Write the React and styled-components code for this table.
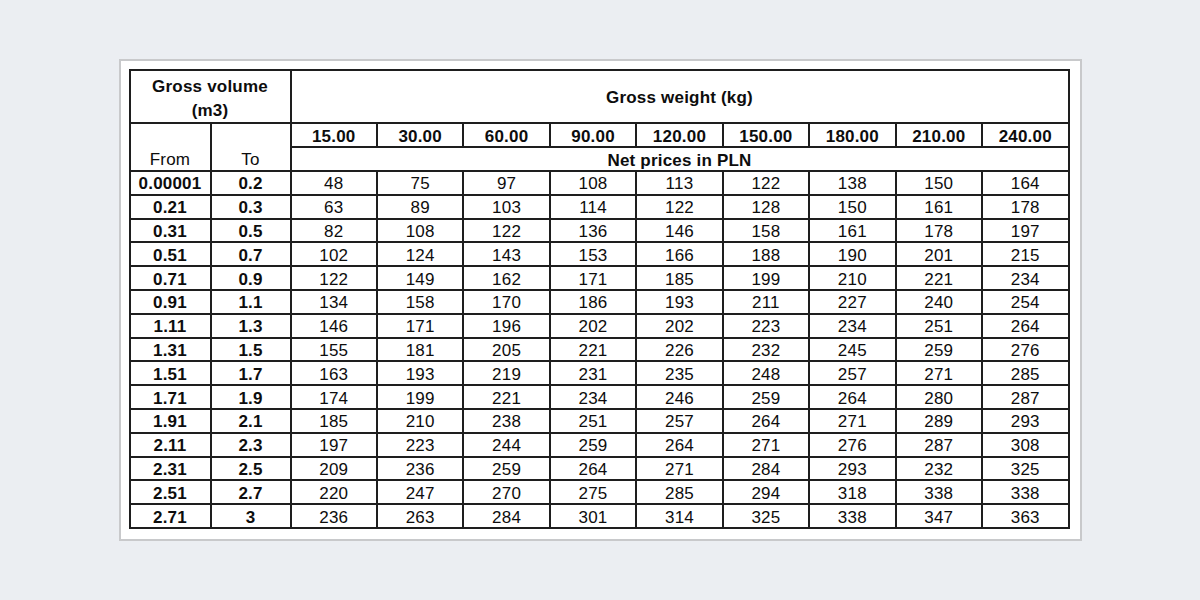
import React from "react";
import styled, { createGlobalStyle } from "styled-components";

const Global = createGlobalStyle`
  html, body { margin: 0; padding: 0; }
  body {
    background: #ebeef2;
    font-family: "Liberation Sans", Arial, sans-serif;
    color: #0d0d0d;
  }
`;

const Page = styled.div`
  height: 600px;
  display: flex;
  align-items: center;
  justify-content: center;
`;

const Card = styled.div`
  background: #fff;
  border: 2px solid #c8c9cb;
  padding: 8px 10px 10px 8px;
`;

const Table = styled.table`
  border-collapse: collapse;
  border: 2px solid #1e1e1e;
  table-layout: fixed;
  width: 941px;
  font-size: 17px;
  letter-spacing: 0.2px;
`;

const Cell = styled.td`
  border: 2px solid #1e1e1e;
  padding: ${(p) => p.$pt || "2px"} 0 0;
  text-align: center;
  vertical-align: ${(p) => p.$valign || "middle"};
  font-weight: ${(p) => (p.$bold ? 700 : 400)};
  line-height: ${(p) => p.$lh || "19px"};
`;

const Label = styled.div`
  padding-bottom: 1px;
`;

const SpanCell = styled.td`
  border: 2px solid #1e1e1e;
  padding: 2px 0 0;
  text-align: center;
  font-weight: 700;
  line-height: 19px;
`;

const Row = styled.tr`
  height: ${(p) => p.$h}px;
`;

const weights = ["15.00", "30.00", "60.00", "90.00", "120.00", "150.00", "180.00", "210.00", "240.00"];

const rows = [
  ["0.00001", "0.2", 48, 75, 97, 108, 113, 122, 138, 150, 164],
  ["0.21", "0.3", 63, 89, 103, 114, 122, 128, 150, 161, 178],
  ["0.31", "0.5", 82, 108, 122, 136, 146, 158, 161, 178, 197],
  ["0.51", "0.7", 102, 124, 143, 153, 166, 188, 190, 201, 215],
  ["0.71", "0.9", 122, 149, 162, 171, 185, 199, 210, 221, 234],
  ["0.91", "1.1", 134, 158, 170, 186, 193, 211, 227, 240, 254],
  ["1.11", "1.3", 146, 171, 196, 202, 202, 223, 234, 251, 264],
  ["1.31", "1.5", 155, 181, 205, 221, 226, 232, 245, 259, 276],
  ["1.51", "1.7", 163, 193, 219, 231, 235, 248, 257, 271, 285],
  ["1.71", "1.9", 174, 199, 221, 234, 246, 259, 264, 280, 287],
  ["1.91", "2.1", 185, 210, 238, 251, 257, 264, 271, 289, 293],
  ["2.11", "2.3", 197, 223, 244, 259, 264, 271, 276, 287, 308],
  ["2.31", "2.5", 209, 236, 259, 264, 271, 284, 293, 232, 325],
  ["2.51", "2.7", 220, 247, 270, 275, 285, 294, 318, 338, 338],
  ["2.71", "3", 236, 263, 284, 301, 314, 325, 338, 347, 363],
];

export default function App() {
  return (
    <>
      <Global />
      <Page>
        <Card>
          <Table>
            <colgroup>
              <col style={{ width: 81 }} />
              <col style={{ width: 80 }} />
              {weights.map((w) => (
                <col key={w} />
              ))}
            </colgroup>
            <tbody>
              <Row $h={53}>
                <Cell colSpan={2} $bold $lh="23.5px" $pt="4px">
                  Gross volume
                  <br />
                  (m3)
                </Cell>
                <Cell colSpan={9} $bold>
                  Gross weight (kg)
                </Cell>
              </Row>
              <Row $h={24}>
                <Cell rowSpan={2} $valign="bottom">
                  <Label>From</Label>
                </Cell>
                <Cell rowSpan={2} $valign="bottom">
                  <Label>To</Label>
                </Cell>
                {weights.map((w) => (
                  <Cell key={w} $bold>
                    {w}
                  </Cell>
                ))}
              </Row>
              <Row $h={24}>
                <SpanCell colSpan={9}>Net prices in PLN</SpanCell>
              </Row>
              {rows.map((r) => (
                <Row $h={23.8} key={r[0]}>
                  <Cell $bold>{r[0]}</Cell>
                  <Cell $bold>{r[1]}</Cell>
                  {r.slice(2).map((v, i) => (
                    <Cell key={i}>{v}</Cell>
                  ))}
                </Row>
              ))}
            </tbody>
          </Table>
        </Card>
      </Page>
    </>
  );
}
